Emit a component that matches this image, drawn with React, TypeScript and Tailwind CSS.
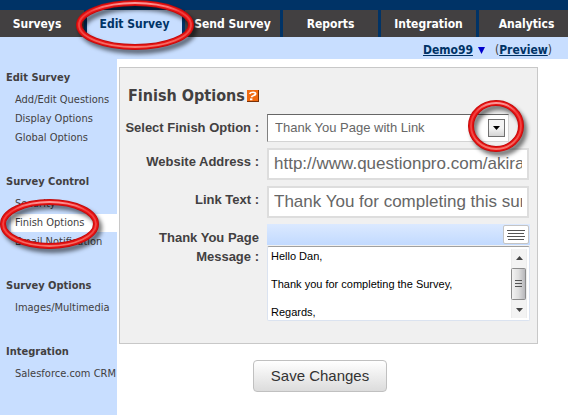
import { useState } from "react";

const tabs = ["Surveys", "Edit Survey", "Send Survey", "Reports", "Integration", "Analytics"];

const sections = [
  { title: "Edit Survey", items: ["Add/Edit Questions", "Display Options", "Global Options"] },
  { title: "Survey Control", items: ["Security", "Finish Options", "Email Notification"] },
  { title: "Survey Options", items: ["Images/Multimedia"] },
  { title: "Integration", items: ["Salesforce.com CRM"] },
];

const message = "Hello Dan,\n\nThank you for completing the Survey,\n\nRegards,";

const labelClass =
  "w-[139px] shrink-0 pt-1 text-right text-[13px] leading-[19px] font-bold whitespace-nowrap text-[#424041]";
const inputClass =
  "h-8 min-w-0 flex-1 mr-px border-2 border-[#dddddd] bg-white px-[5px] text-[17px] text-[#666666] outline-none";

function Ring({ id, width, height, className }: { id: string; width: number; height: number; className: string }) {
  const cx = width / 2;
  const cy = height / 2;
  const rx = cx - 3;
  const ry = cy - 3;
  return (
    <svg
      width={width}
      height={height}
      className={`pointer-events-none absolute z-20 overflow-visible ${className}`}
      aria-hidden="true"
    >
      <defs>
        <filter id={id} x="-20%" y="-20%" width="150%" height="150%">
          <feGaussianBlur stdDeviation="2.2" />
        </filter>
        <linearGradient id={`${id}-shine`} x1="0" y1="0" x2="0" y2="1">
          <stop offset="0" stopColor="#fb9a9a" />
          <stop offset="0.2" stopColor="#f23c3c" />
          <stop offset="0.7" stopColor="#f04a46" />
          <stop offset="1" stopColor="#f4776e" />
        </linearGradient>
      </defs>
      <ellipse cx={cx + 3} cy={cy + 4} rx={rx} ry={ry} fill="none" stroke="#000" strokeOpacity="0.55" strokeWidth="6" filter={`url(#${id})`} />
      <ellipse cx={cx} cy={cy} rx={rx} ry={ry} fill="none" stroke="#c00c0c" strokeWidth="6" />
      <ellipse cx={cx} cy={cy} rx={rx} ry={ry} fill="none" stroke="#e61212" strokeWidth="4.4" />
      <ellipse cx={cx} cy={cy} rx={rx} ry={ry} fill="none" stroke={`url(#${id}-shine)`} strokeWidth="1.8" />
    </svg>
  );
}

function HelpIcon() {
  return (
    <svg width="12" height="12" viewBox="0 0 12 12" aria-hidden="true">
      <rect width="12" height="12" fill="#7a3208" />
      <rect width="11" height="11" fill="#f06a10" />
      <path d="M2.6 3.8 C3.6 1.8 9 1.6 8.6 4 C8.3 5.6 5 5.4 4.4 7.2" fill="none" stroke="#fff" strokeWidth="1.7" />
      <path d="M3 9.3 H5.4" stroke="#fff" strokeWidth="1.8" />
    </svg>
  );
}

function ScrollBar() {
  return (
    <svg width="16" height="69" viewBox="0 0 16 69" className="shrink-0" aria-hidden="true">
      <defs>
        <linearGradient id="thumb" x1="0" x2="1">
          <stop offset="0" stopColor="#f4f4f4" />
          <stop offset="0.5" stopColor="#dedede" />
          <stop offset="1" stopColor="#b4b4b8" />
        </linearGradient>
      </defs>
      <rect width="16" height="69" fill="#ececec" />
      <rect x="1" width="14" height="69" fill="#f3f3f3" />
      <path d="M5 11 L8.5 7 L12 11 Z" fill="#444" />
      <rect x="0.5" y="19.5" width="14" height="31" rx="1" fill="url(#thumb)" stroke="#8c8c8c" />
      <path d="M4 31.5 H11 M4 34.5 H11 M4 37.5 H11" stroke="#555" />
      <path d="M5 59 L8.5 63 L12 59 Z" fill="#444" />
    </svg>
  );
}

export default function App() {
  const [address, setAddress] = useState("http://www.questionpro.com/akiranakamura");
  const [linkText, setLinkText] = useState("Thank You for completing this survey");
  const [body, setBody] = useState(message);

  return (
    <div className="flex min-h-screen flex-col overflow-hidden bg-white font-['DejaVu_Sans_Condensed','DejaVu_Sans',sans-serif] text-[#424041]">
      <header>
        <nav className="flex gap-[3px] bg-[#003366] pt-2.5">
          {tabs.map((tab, i) => (
            <div key={tab} className={`relative h-[27px] shrink-0 ${i === 0 ? "w-[84px]" : "w-[95px]"}`}>
              <a
                href="#"
                className={`flex h-full items-center justify-center text-[12px] font-bold ${
                  i === 1 ? "bg-[#c8deff] text-[#003366]" : "bg-[#424041] text-white"
                } ${i === 0 ? "pr-2.5" : ""}`}
              >
                {tab}
              </a>
              {i === 1 && <Ring id="ring-tab" width={118} height={50} className="-top-2.5 -left-[11px]" />}
            </div>
          ))}
        </nav>
        <div className="flex h-[22px] items-center justify-end bg-[#c8deff] pt-1 pr-4 text-[12px]">
          <a href="#" className="font-bold text-[#003366] underline">Demo99</a>
          <svg width="7" height="7" className="mx-[5px]" aria-hidden="true">
            <path d="M0 0 H7 L3.5 7 Z" fill="#0000cc" />
          </svg>
          <span className="ml-[5px]">
            (<a href="#" className="font-bold text-[#003366] underline">Preview</a>)
          </span>
        </div>
      </header>

      <div className="flex flex-1">
        <aside className="flex w-[117px] shrink-0 flex-col gap-[26px] bg-[#c8deff] pt-2.5 whitespace-nowrap">
          {sections.map((section) => (
            <section key={section.title}>
              <h2 className="mb-1 pl-1.5 text-[11px] leading-[18px] font-bold">{section.title}</h2>
              <ul className="flex flex-col gap-px pl-[11px] text-[11px] leading-[18px]">
                {section.items.map((item) => (
                  <li key={item} className={`relative pl-1 ${item === "Finish Options" ? "bg-white" : ""}`}>
                    <a href="#">{item}</a>
                    {item === "Finish Options" && (
                      <Ring id="ring-menu" width={99} height={50} className="-top-[15px] -left-[11px]" />
                    )}
                  </li>
                ))}
              </ul>
            </section>
          ))}
        </aside>

        <main className="min-w-0 flex-1 pt-2 pr-[30px] pl-0.5">
          <form className="flex flex-col" onSubmit={(e) => e.preventDefault()}>
            <div className="flex flex-col gap-1.5 border border-[#c8c8c8] bg-[#f0f0f0] pt-4 pr-[7px] pb-[22px] font-['Liberation_Sans',Arial,sans-serif]">
              <h1 className="flex items-center gap-0.5 pl-2 font-['DejaVu_Sans_Condensed','DejaVu_Sans',sans-serif] text-[16px] leading-6 font-bold">
                Finish Options
                <HelpIcon />
              </h1>

              <div className="flex gap-2">
                <label htmlFor="finish-option" className={labelClass}>Select Finish Option :</label>
                <div className="relative mr-[21px] min-w-0 flex-1">
                  <select
                    id="finish-option"
                    className="block h-7 w-full appearance-none border border-t-[#666666] border-r-[#d4d4d4] border-b-[#d4d4d4] border-l-[#808080] bg-white pl-[7px] text-[13px] text-[#666666] outline-none"
                  >
                    <option>Thank You Page with Link</option>
                  </select>
                  <span className="pointer-events-none absolute top-[5px] right-1 flex h-[18px] w-[17px] items-center justify-center border border-[#707070] bg-linear-to-b from-[#f4f4f4] from-50% to-[#d4d4d4]">
                    <svg width="7" height="4" aria-hidden="true">
                      <path d="M0 0 H7 L3.5 4 Z" fill="#000" />
                    </svg>
                  </span>
                  <Ring id="ring-select" width={56} height={52} className="-top-3.5 -right-[15px]" />
                </div>
              </div>

              <div className="flex gap-2">
                <label htmlFor="address" className={labelClass}>Website Address :</label>
                <input id="address" className={inputClass} value={address} onChange={(e) => setAddress(e.target.value)} />
              </div>

              <div className="flex gap-2">
                <label htmlFor="link-text" className={labelClass}>Link Text :</label>
                <input id="link-text" className={inputClass} value={linkText} onChange={(e) => setLinkText(e.target.value)} />
              </div>

              <div className="flex gap-2">
                <label htmlFor="message" className={labelClass}>
                  Thank You Page<br />Message :
                </label>
                <div className="min-w-0 flex-1">
                  <div className="mb-px flex h-[21px] justify-end bg-linear-to-b from-[#dbe9ff] to-[#c2daff] pt-px pr-px">
                    <button type="button" aria-label="Toggle editor toolbar" className="h-[19px] w-[26px] rounded-xs border border-[#c4c4c4] bg-white">
                      <svg width="18" height="13" className="mx-auto" aria-hidden="true">
                        <path d="M0 2.5 H18 M1 5.5 H17 M0 8.5 H18 M1 11.5 H17" stroke="#555" />
                      </svg>
                    </button>
                  </div>
                  <div className="flex h-[75px] rounded-xs border border-t-[#a0a0a0] border-r-[#dbe3f0] border-b-[#dbe3f0] border-l-[#dbe3f0] bg-white pt-0.5 pr-0.5">
                    <textarea
                      id="message"
                      className="block min-w-0 flex-1 resize-none overflow-hidden pl-[3px] text-[11px] leading-[14px] text-black outline-none"
                      value={body}
                      onChange={(e) => setBody(e.target.value)}
                    />
                    <ScrollBar />
                  </div>
                </div>
              </div>
            </div>

            <button
              type="submit"
              className="mt-4 ml-[134px] h-8 w-[134px] rounded-sm border border-[#c0c0c0] bg-linear-to-b from-white to-[#dcdcdc] font-['Liberation_Sans',Arial,sans-serif] text-[15px] text-[#333333]"
            >
              Save Changes
            </button>
          </form>
        </main>
      </div>
    </div>
  );
}
